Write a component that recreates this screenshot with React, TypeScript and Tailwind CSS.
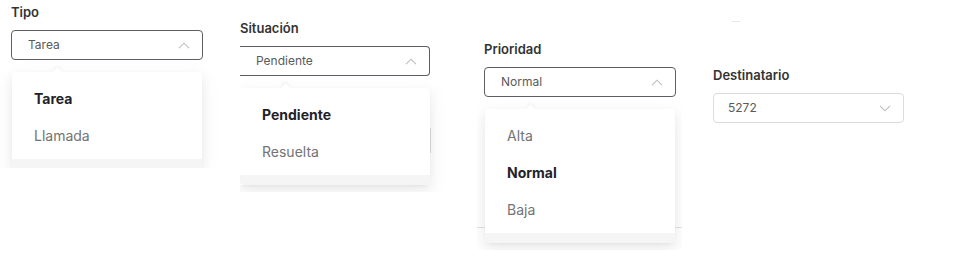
import React from "react";

type Option = { label: string; selected?: boolean };

const ChevronUp = () => (
  <svg width="12" height="7" viewBox="0 0 12 7" fill="none">
    <path d="M1 6.2 L6 1.2 L11 6.2" stroke="#bdbdbd" strokeWidth="1.1" />
  </svg>
);

const ChevronDown = () => (
  <svg width="12" height="7" viewBox="0 0 12 7" fill="none">
    <path d="M1 0.8 L6 5.8 L11 0.8" stroke="#bdbdbd" strokeWidth="1.1" />
  </svg>
);

const Label = ({ children }: { children: React.ReactNode }) => (
  <div className="h-4 text-[13px] leading-4 font-semibold text-[#333333]">{children}</div>
);

const SelectBox = ({
  value,
  open,
  clipLeft,
}: {
  value: string;
  open?: boolean;
  clipLeft?: boolean;
}) => (
  <div
    className={`mt-[10px] h-[30px] flex items-center justify-between pr-[12px] bg-white ${
      open
        ? "border-[1.5px] border-[#5c5f63] rounded-[4px]"
        : "border border-[#dcdcdc] rounded-[4px] pr-[11px]"
    } ${clipLeft ? "border-l-0 rounded-l-none pl-[16px]" : open ? "pl-[16px]" : "pl-[14px]"}`}
  >
    <span className="text-[12px] text-[#5a5a5a]">{value}</span>
    {open ? <ChevronUp /> : <ChevronDown />}
  </div>
);

const Dropdown = ({ options, clipLeft }: { options: Option[]; clipLeft?: boolean }) => (
  <div
    className={`relative mt-[12px] bg-white rounded-[4px] pt-[8px] shadow-[0_2px_5px_-3px_rgba(0,0,0,0.10),0_4px_12px_0_rgba(0,0,0,0.06),0_6px_20px_4px_rgba(0,0,0,0.035)] ${
      clipLeft ? "rounded-l-none" : "mx-px"
    }`}
  >
    <div className="absolute -top-[3px] left-[42px] w-[7px] h-[7px] rotate-45 bg-white shadow-[-2px_-2px_4px_rgba(0,0,0,0.04)]" />
    {options.map((o) => (
      <div
        key={o.label}
        className={`relative h-[37px] flex items-center pl-[22px] text-[14px] ${
          o.selected ? "font-bold text-[#1f2329]" : "text-[#737373]"
        }`}
      >
        {o.label}
      </div>
    ))}
    <div className="mt-[5px] h-[10px] bg-[#f5f5f5] rounded-b-[4px]" />
  </div>
);

export default function App() {
  return (
    <div
      className="relative w-[955px] h-[264px] bg-white flex items-start overflow-hidden"
      style={{ fontFamily: "Inter, 'Liberation Sans', sans-serif" }}
    >
      {/* Tipo */}
      <div className="w-[240px] h-[168px] overflow-hidden pl-[11px] pt-[4px]">
        <div className="w-[192px]">
          <Label>Tipo</Label>
          <SelectBox value="Tarea" open />
          <Dropdown options={[{ label: "Tarea", selected: true }, { label: "Llamada" }]} />
        </div>
      </div>

      {/* Situación */}
      <div className="relative w-[237px] h-[192px] overflow-hidden pt-[20px]">
        <div className="w-[190px]">
          <Label>Situación</Label>
          <SelectBox value="Pendiente" open clipLeft />
          <Dropdown
            clipLeft
            options={[{ label: "Pendiente", selected: true }, { label: "Resuelta" }]}
          />
        </div>
        <div className="absolute left-[190px] top-[128px] w-px h-[25px] bg-[#cfcfcf]" />
      </div>

      {/* Prioridad */}
      <div className="relative w-[205px] h-[250px] overflow-hidden pl-[7px] pt-[41px]">
        <div className="absolute left-0 right-0 top-[227px] h-px bg-[#e2e2e2]" />
        <div className="relative w-[192px]">
          <Label>Prioridad</Label>
          <SelectBox value="Normal" open />
          <Dropdown
            options={[{ label: "Alta" }, { label: "Normal", selected: true }, { label: "Baja" }]}
          />
        </div>
      </div>

      {/* Destinatario */}
      <div className="pl-[31px] pt-[21px]">
        <div className="ml-[19px] w-[8px] h-px bg-[#e6e6e6]" />
        <div className="w-[191px] mt-[45px]">
          <Label>Destinatario</Label>
          <SelectBox value="5272" />
        </div>
      </div>
    </div>
  );
}
